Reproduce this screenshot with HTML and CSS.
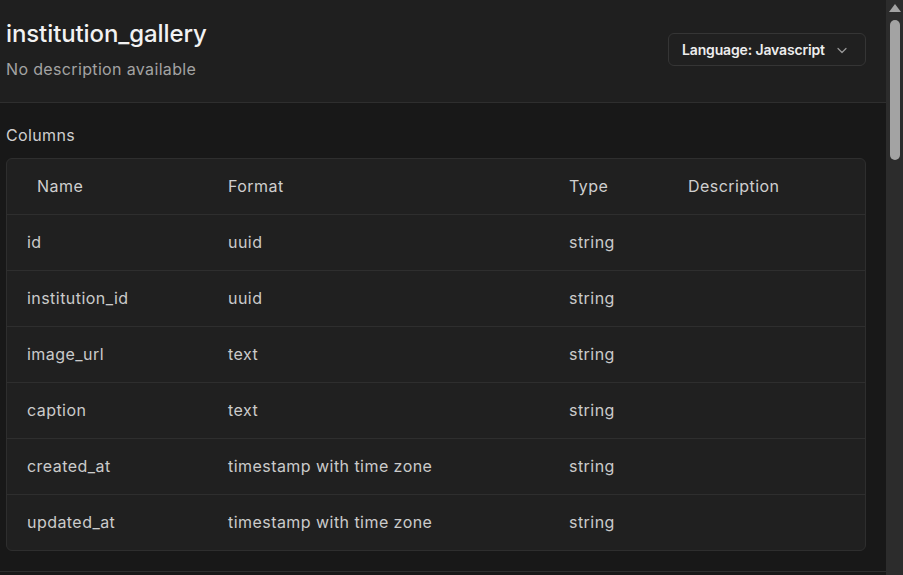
FILE: index.html
```html
<!DOCTYPE html>
<html>
<head>
<meta charset="utf-8">
<link rel="stylesheet" href="styles.css">
</head>
<body>
<div class="app">
  <main class="main">
    <header class="header">
      <div class="titles">
        <h1 class="title">institution_gallery</h1>
        <p class="subtitle">No description available</p>
      </div>
      <button class="lang">
        <span class="lang-text">Language: Javascript</span>
        <svg class="chev" width="14" height="14" viewBox="0 0 14 14"><path d="M3 5.5 L7 9.5 L11 5.5" fill="none" stroke="#9a9a9a" stroke-width="1.2" stroke-linecap="round" stroke-linejoin="round"/></svg>
      </button>
    </header>
    <section class="section">
      <h2 class="label">Columns</h2>
      <div class="card">
        <table class="tbl">
          <thead>
            <tr><th class="c1 hname">Name</th><th class="c2">Format</th><th class="c3">Type</th><th class="c4">Description</th></tr>
          </thead>
          <tbody>
            <tr><td>id</td><td>uuid</td><td>string</td><td></td></tr>
            <tr><td>institution_id</td><td>uuid</td><td>string</td><td></td></tr>
            <tr><td>image_url</td><td>text</td><td>string</td><td></td></tr>
            <tr><td>caption</td><td>text</td><td>string</td><td></td></tr>
            <tr><td>created_at</td><td>timestamp with time zone</td><td>string</td><td></td></tr>
            <tr><td>updated_at</td><td>timestamp with time zone</td><td>string</td><td></td></tr>
          </tbody>
        </table>
      </div>
    </section>
    <div class="next"></div>
  </main>
  <div class="scrollbar">
    <div class="arrow"></div>
    <div class="thumb"></div>
  </div>
</div>
</body>
</html>
```

FILE: styles.css
```css
* { box-sizing: border-box; }
html, body { margin: 0; padding: 0; height: 100%; overflow: hidden; }
body {
  background: #181818;
  font-family: Inter, "Noto Sans", sans-serif;
  color: #ededed;
}
.app { display: flex; height: 575px; }
.main { flex: 1; min-width: 0; background: #181818; }
.header {
  height: 103px;
  background: #1f1f1f;
  border-bottom: 1px solid #2e2e2e;
  display: flex;
  justify-content: space-between;
  align-items: flex-start;
  padding: 20px 20px 0 6px;
}
.title {
  margin: 0;
  font-size: 24px;
  font-weight: 500;
  line-height: 28px;
  color: #f2f2f2;
  letter-spacing: -0.1px;
}
.subtitle {
  margin: 11px 0 0;
  font-size: 16px;
  line-height: 20px;
  color: #a3a3a3;
  letter-spacing: 0.35px;
}
.lang {
  margin-top: 13px;
  height: 33px;
  width: 198px;
  background: #202020;
  border: 1px solid #353535;
  border-radius: 6px;
  color: #ededed;
  font-family: inherit;
  font-size: 14px;
  font-weight: 600;
  display: flex;
  align-items: center;
  justify-content: space-between;
  padding: 0 16px 0 13px;
  white-space: nowrap;
}
.lang-text { letter-spacing: -0.15px; }
.chev { flex: none; }
.section { padding: 21px 20px 20px 6px; border-bottom: 1px solid #2e2e2e; }
.label {
  margin: 0 0 12px;
  font-size: 16px;
  font-weight: 400;
  line-height: 22px;
  color: #cfcfcf;
  letter-spacing: 0.35px;
}
.card {
  background: #202020;
  border: 1px solid #2e2e2e;
  border-radius: 6px;
  overflow: hidden;
}
.tbl { width: 100%; border-collapse: collapse; table-layout: fixed; }
.tbl th, .tbl td {
  height: 56px;
  padding: 0 0 0 20px;
  text-align: left;
  font-size: 16px;
  font-weight: 400;
  color: #cbcbcb;
  letter-spacing: 0.45px;
}
.tbl th { height: 55px; color: #cfcfcf; }
.tbl td { border-top: 1px solid #2e2e2e; }
.tbl .hname { padding-left: 30px; }
.c1 { width: 201px; }
.c2 { width: 341px; }
.c3 { width: 119px; }
.next { height: 10px; }
.scrollbar {
  width: 17px;
  background: #2c2c2c;
  display: flex;
  flex-direction: column;
  align-items: center;
  padding-top: 4px;
}
.arrow {
  width: 0; height: 0;
  border-left: 6px solid transparent;
  border-right: 6px solid transparent;
  border-bottom: 8px solid #a3a3a3;
}
.thumb {
  margin-top: 8px;
  width: 10px;
  height: 140px;
  background: #a3a3a3;
  border-radius: 5px;
}
```
